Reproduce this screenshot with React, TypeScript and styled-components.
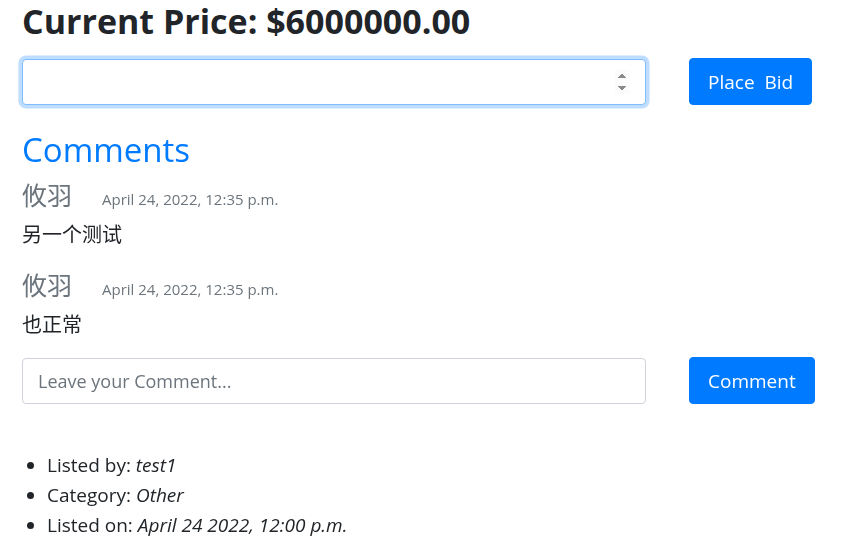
import React from "react";
import styled, { createGlobalStyle } from "styled-components";

const GlobalStyle = createGlobalStyle`
  html, body {
    margin: 0;
    padding: 0;
    background: #ffffff;
  }
  body {
    font-family: "Open Sans", "Noto Sans CJK SC", sans-serif;
    color: #212529;
    font-size: 18px;
  }
  input[type="number"]::-webkit-inner-spin-button {
    opacity: 1;
  }
`;

const Page = styled.div`
  padding: 0 22px;
  width: 792px;
`;

const PriceTitle = styled.h2`
  margin: 0;
  font-size: 34px;
  line-height: 43px;
  font-weight: 700;
  color: #212529;
`;

const FormRow = styled.form<{ $top: number }>`
  display: grid;
  grid-template-columns: 624px auto;
  column-gap: 43px;
  justify-content: start;
  align-items: center;
  margin-top: ${(p) => p.$top}px;
`;

const TextInput = styled.input`
  box-sizing: border-box;
  height: 46px;
  width: 100%;
  padding: 0 15px;
  font-family: "Open Sans", "Noto Sans CJK SC", sans-serif;
  font-size: 18px;
  color: #495057;
  background: #fff;
  border: 1px solid #ced4da;
  border-radius: 4px;
  outline: none;
  &::placeholder {
    color: #6c757d;
  }
  &:focus {
    border-color: #80bdff;
    box-shadow: 0 0 0 3.6px rgba(0, 123, 255, 0.25);
  }
`;

const PrimaryButton = styled.button`
  box-sizing: border-box;
  height: 47px;
  padding: 0 18px;
  font-family: "Open Sans", sans-serif;
  font-size: 19px;
  white-space: pre;
  color: #fff;
  background: #007bff;
  border: 1px solid #007bff;
  border-radius: 4px;
  cursor: pointer;
`;

const SectionTitle = styled.h2`
  margin: 25px 0 0;
  font-size: 33px;
  line-height: 40px;
  font-weight: 500;
  color: #007bff;
`;

const CommentItem = styled.div`
  margin-bottom: 18px;
`;

const CommentHeader = styled.div`
  display: flex;
  align-items: baseline;
  gap: 30px;
  margin-top: 7px;
`;

const Author = styled.span`
  font-family: "Noto Sans CJK SC", sans-serif;
  font-size: 25px;
  line-height: 34px;
  color: #6c757d;
`;

const Timestamp = styled.small`
  font-size: 15px;
  color: #6c757d;
`;

const CommentBody = styled.p`
  margin: 8px 0 0;
  font-family: "Noto Sans CJK SC", sans-serif;
  font-size: 20px;
  line-height: 30px;
`;

const DetailList = styled.ul`
  margin: 46px 0 0;
  padding-left: 25px;
  font-size: 19px;
  line-height: 30px;
`;

const DetailItem = styled.li``;

const comments = [
  { author: "攸羽", time: "April 24, 2022, 12:35 p.m.", text: "另一个测试" },
  { author: "攸羽", time: "April 24, 2022, 12:35 p.m.", text: "也正常" },
];

export default function App() {
  return (
    <>
      <GlobalStyle />
      <Page>
        <PriceTitle>Current Price: $6000000.00</PriceTitle>
        <FormRow $top={15} onSubmit={(e) => e.preventDefault()}>
          <TextInput type="number" autoFocus />
          <PrimaryButton type="submit">{"Place  Bid"}</PrimaryButton>
        </FormRow>
        <SectionTitle>Comments</SectionTitle>
        {comments.map((c, i) => (
          <CommentItem key={i}>
            <CommentHeader>
              <Author>{c.author}</Author>
              <Timestamp>{c.time}</Timestamp>
            </CommentHeader>
            <CommentBody>{c.text}</CommentBody>
          </CommentItem>
        ))}
        <FormRow $top={9} onSubmit={(e) => e.preventDefault()}>
          <TextInput type="text" placeholder="Leave your Comment..." />
          <PrimaryButton type="submit">Comment</PrimaryButton>
        </FormRow>
        <DetailList>
          <DetailItem>
            Listed by: <em>test1</em>
          </DetailItem>
          <DetailItem>
            Category: <em>Other</em>
          </DetailItem>
          <DetailItem>
            Listed on: <em>April 24 2022, 12:00 p.m.</em>
          </DetailItem>
        </DetailList>
      </Page>
    </>
  );
}
